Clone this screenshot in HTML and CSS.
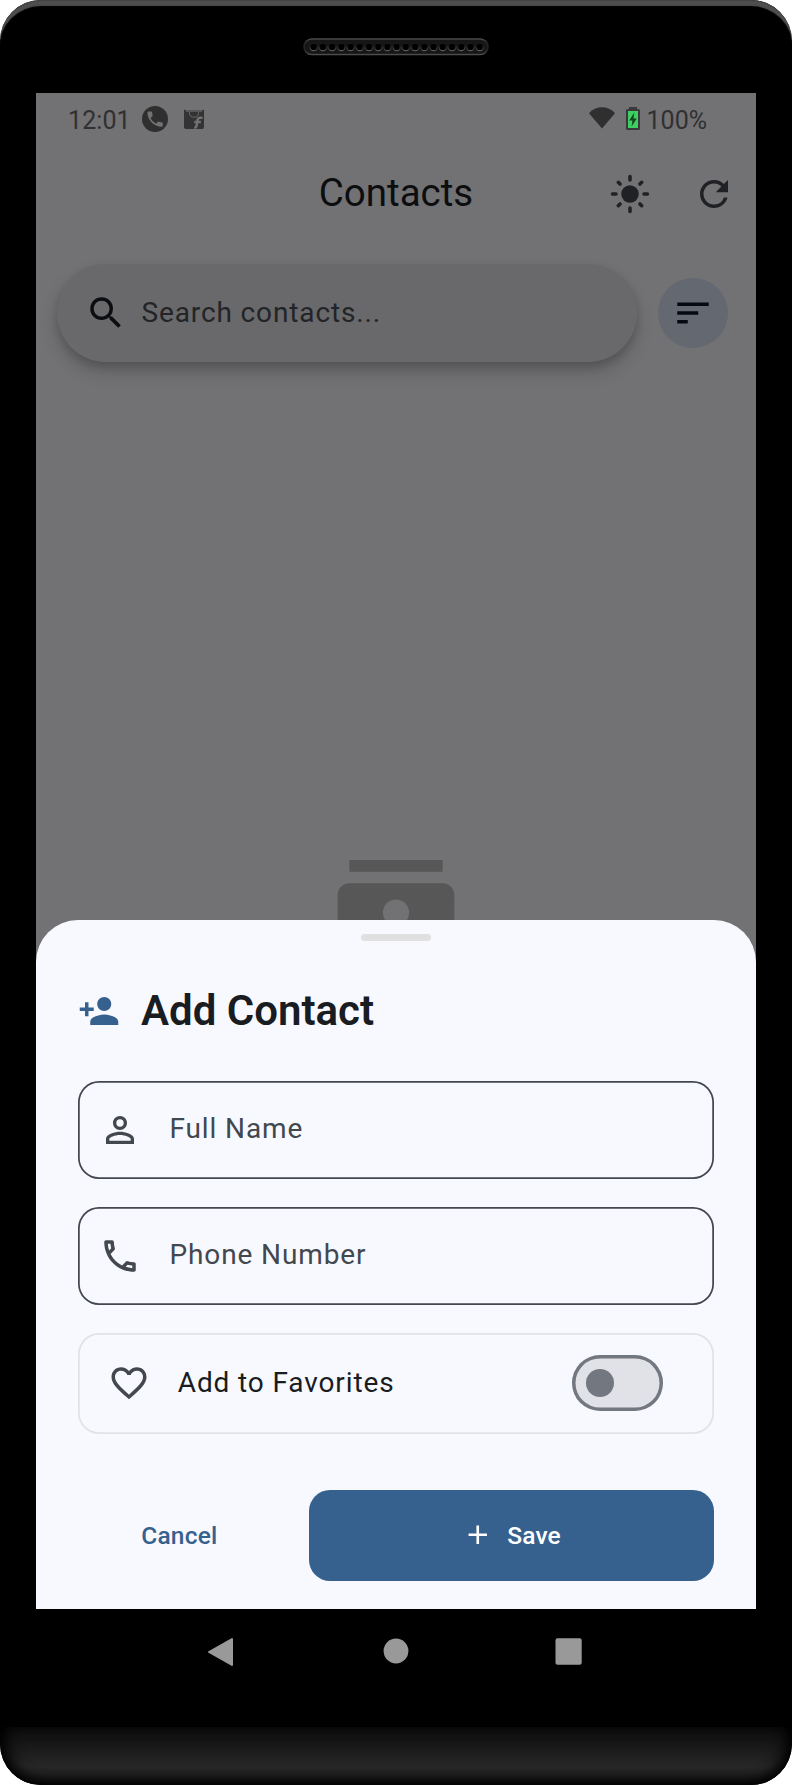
FILE: index.html
```html
<!DOCTYPE html>
<html lang="en">
<head>
<meta charset="utf-8">
<title>Contacts</title>
<link rel="stylesheet" href="styles.css">
</head>
<body>
<div class="phone">
  <div class="bezel-top">
    <svg class="speaker" width="186" height="18" viewBox="0 0 186 18">
      <defs>
        <linearGradient id="rim" x1="0" y1="0" x2="0" y2="1">
          <stop offset="0" stop-color="#4a4a4a"/><stop offset=".3" stop-color="#222"/><stop offset=".7" stop-color="#222"/><stop offset="1" stop-color="#4c4c4c"/>
        </linearGradient>
        <linearGradient id="hole" x1="0" y1="0" x2="0" y2="1">
          <stop offset=".3" stop-color="#1a1a1a"/><stop offset="1" stop-color="#6a6a6a"/>
        </linearGradient>
        <pattern id="holes" x="6.1" y="4" width="9.22" height="10" patternUnits="userSpaceOnUse">
          <circle cx="4.6" cy="5" r="3.7" fill="#000" stroke="url(#hole)" stroke-width="1"/>
        </pattern>
      </defs>
      <rect x="1" y="1" width="184" height="15.5" rx="7.75" fill="#161616" stroke="url(#rim)" stroke-width="1.6"/>
      <rect x="6.1" y="4" width="175.2" height="10" fill="url(#holes)"/>
    </svg>
  </div>

  <div class="screen">
    <div class="status">
      <span class="clock">12:01</span>
      <svg class="st-call" width="26" height="26" viewBox="0 0 26 26">
        <circle cx="13" cy="13" r="13" fill="#2f2f2f"/>
        <path transform="translate(2.9 2.9) scale(.85)" fill="#727274" d="M6.6 10.8c1.4 2.8 3.8 5.1 6.6 6.6l2.2-2.2c.3-.3.7-.4 1-.2 1.1.4 2.300.6 3.600.6.6 0 1 .4 1 1V20c0 .6-.4 1-1 1-9.400 0-17-7.600-17-17 0-.6.4-1 1-1h3.500c.6 0 1 .4 1 1 0 1.200.2 2.400.6 3.600.1.3 0 .7-.2 1z"/>
      </svg>
      <svg class="st-bag" width="20" height="20" viewBox="0 0 20 20">
        <path fill="#333" d="M0 .5 2 1.500h16l2-1V18a2 2 0 0 1-2 2H2a2 2 0 0 1-2-2z"/>
        <path fill="none" stroke="#68686a" stroke-width="1" d="M2 2.200h16M5.500 3v1.500a4.500 3.800 0 0 0 9 0V3"/>
        <path fill="none" stroke="#727274" stroke-width="2.400" d="M18.500 8.700h-2.200c-1.800 0-2.600.8-2.800 2.500l-.8 5.300c-.2 1.400-1 2.100-2.400 2.100M10.300 13h6.600"/>
      </svg>
      <span class="spacer"></span>
      <svg class="st-wifi" width="26" height="22" viewBox="0 0 26 22"><path fill="#2f2f2f" d="M13 21.500 0 6.300C3.500 2.200 8 .3 13 .3s9.500 1.900 13 6z"/></svg>
      <svg class="st-batt" width="14" height="23" viewBox="0 0 14 23">
        <path fill="#3a3a3c" d="M3 0h8v2h1.500A1.500 1.500 0 0 1 14 3.500v18a1.500 1.500 0 0 1-1.500 1.500h-11A1.500 1.500 0 0 1 0 21.500v-18A1.500 1.500 0 0 1 1.500 2H3z"/>
        <rect x="2" y="4" width="10" height="17" fill="#3ecf63"/>
        <path fill="#14461f" d="M8.300 5.500 3.200 13.600h3.200l-.8 5.900 5.200-8.100H7.500z"/>
      </svg>
      <span class="pct">100%</span>
    </div>

    <div class="appbar">
      <h1 class="appbar-title">Contacts</h1>
      <div class="actions">
        <svg class="ic" viewBox="0 0 24 24"><circle cx="12" cy="12" r="5" fill="#202124"/><path fill="none" stroke="#202124" stroke-width="2" stroke-linecap="round" d="M2 12h2M20 12h2M12 2v2M12 20v2M5.290 5.290l1.050 1.050M17.660 17.660l1.050 1.050M18.710 5.290l-1.050 1.050M6.340 17.660l-1.050 1.050"/></svg>
        <svg class="ic" viewBox="0 0 24 24"><path fill="#202124" d="M17.650 6.350A7.958 7.958 0 0 0 12 4c-4.420 0-7.990 3.580-7.990 8s3.570 8 7.990 8c3.730 0 6.840-2.550 7.730-6h-2.080A5.990 5.990 0 0 1 12 18c-3.310 0-6-2.690-6-6s2.690-6 6-6c1.660 0 3.140.69 4.220 1.780L13 11h7V4l-2.350 2.350z"/></svg>
      </div>
    </div>

    <div class="search-row">
      <div class="search">
        <svg class="ic" viewBox="0 0 24 24"><path fill="#0c0d10" d="M15.500 14h-.79l-.28-.27A6.471 6.471 0 0 0 16 9.500 6.500 6.500 0 1 0 9.500 16c1.610 0 3.090-.59 4.230-1.570l.27.28v.79l5 4.990L20.490 19l-4.990-5zm-6 0C7.010 14 5 11.990 5 9.500S7.010 5 9.500 5 14 7.010 14 9.500 11.990 14 9.500 14z"/></svg>
        <span class="hint">Search contacts...</span>
      </div>
      <div class="sort">
        <svg class="ic" viewBox="0 0 24 24"><path fill="#040a14" d="M3 18h6v-2H3v2zM3 6v2h18V6H3zm0 7h12v-2H3v2z"/></svg>
      </div>
    </div>

    <div class="empty">
      <svg width="140" height="140" viewBox="0 0 24 24"><path fill="#575757" d="M20 0H4v2h16V0zM4 24h16v-2H4v2zM20 4H4c-1.100 0-2 .9-2 2v12c0 1.100.9 2 2 2h16c1.100 0 2-.9 2-2V6c0-1.100-.9-2-2-2zm-8 2.750a2.250 2.250 0 1 1 0 4.500 2.250 2.250 0 0 1 0-4.500zM17 17H7v-1.500c0-1.670 3.330-2.500 5-2.500s5 .83 5 2.500V17z"/></svg>
    </div>

    <div class="sheet">
      <div class="handle"></div>
      <div class="sheet-head">
        <svg class="ic" viewBox="0 0 24 24"><path fill="#36618e" d="M15 12c2.210 0 4-1.790 4-4s-1.790-4-4-4-4 1.790-4 4 1.790 4 4 4zm-9-2V7H4v3H1v2h3v3h2v-3h3v-2H6zm9 4c-2.670 0-8 1.340-8 4v2h16v-2c0-2.660-5.330-4-8-4z"/></svg>
        <h2 class="sheet-title">Add Contact</h2>
      </div>
      <div class="field">
        <svg class="ic" viewBox="0 0 24 24"><path fill="#43474e" d="M12 5.900a2.100 2.100 0 1 1 0 4.200 2.100 2.100 0 0 1 0-4.200m0 9c2.970 0 6.100 1.460 6.100 2.100v1.100H5.900V17c0-.64 3.130-2.100 6.100-2.100M12 4C9.790 4 8 5.790 8 8s1.790 4 4 4 4-1.790 4-4-1.790-4-4-4zm0 9c-2.670 0-8 1.340-8 4v3h16v-3c0-2.660-5.330-4-8-4z"/></svg>
        <span class="label">Full Name</span>
      </div>
      <div class="field">
        <svg class="ic" viewBox="0 0 24 24"><path fill="#43474e" d="M6.540 5c.06.89.21 1.760.45 2.590l-1.200 1.200c-.41-1.200-.67-2.470-.76-3.790h1.510m9.860 12.020c.85.24 1.720.39 2.600.45v1.490c-1.320-.09-2.590-.35-3.800-.75l1.200-1.190M7.500 3H4c-.55 0-1 .45-1 1 0 9.390 7.610 17 17 17 .55 0 1-.45 1-1v-3.490c0-.55-.45-1-1-1-1.240 0-2.450-.2-3.570-.57a.84.84 0 0 0-.31-.05c-.26 0-.51.1-.71.29l-2.200 2.200a15.149 15.149 0 0 1-6.590-6.590l2.200-2.200c.28-.28.36-.67.25-1.020A11.360 11.360 0 0 1 8.500 4c0-.55-.45-1-1-1z"/></svg>
        <span class="label">Phone Number</span>
      </div>
      <div class="favorite">
        <svg class="ic" viewBox="0 0 24 24"><path fill="#43474e" d="M16.500 3c-1.740 0-3.410.81-4.500 2.090C10.910 3.810 9.240 3 7.500 3 4.420 3 2 5.420 2 8.500c0 3.780 3.400 6.860 8.550 11.540L12 21.350l1.450-1.320C18.600 15.360 22 12.280 22 8.500 22 5.420 19.580 3 16.500 3zm-4.400 15.550-.1.100-.1-.1C7.140 14.240 4 11.390 4 8.500 4 6.500 5.500 5 7.500 5c1.540 0 3.040.99 3.570 2.360h1.870C13.460 5.990 14.960 5 16.500 5c2 0 3.500 1.500 3.500 3.500 0 2.890-3.140 5.740-7.900 10.050z"/></svg>
        <span class="fav-label">Add to Favorites</span>
        <div class="switch"><div class="knob"></div></div>
      </div>
      <div class="buttons">
        <div class="cancel">Cancel</div>
        <div class="save">
          <svg width="31.500" height="31.500" viewBox="0 0 24 24"><path fill="#fff" d="M19 13h-6v6h-2v-6H5v-2h6V5h2v6h6v2z"/></svg>
          <span>Save</span>
        </div>
      </div>
    </div>
  </div>

  <div class="navbar">
    <svg width="27" height="30" viewBox="0 0 27 30"><path fill="#999" stroke="#999" stroke-width="2" stroke-linejoin="round" d="M25 2v26L2 15z"/></svg>
    <svg width="28" height="26" viewBox="0 0 28 26"><circle cx="15" cy="13" r="12.400" fill="#999"/></svg>
    <svg width="27" height="27" viewBox="0 0 27 27"><rect x=".5" y=".3" width="26.200" height="26.400" rx="2" fill="#999"/></svg>
  </div>
  <div class="chin"></div>
</div>
</body>
</html>
```

FILE: styles.css
```css
* { box-sizing: border-box; }
body { margin: 0; background: #fff; font-family: Roboto, "Liberation Sans", sans-serif; }
h1, h2 { margin: 0; }
svg { display: block; flex: none; }
.ic { width: 42px; height: 42px; }

.phone {
  width: 792px; height: 1785px;
  display: flex; flex-direction: column;
  background: #000; border-radius: 41px; overflow: hidden;
}
.bezel-top {
  height: 93px; flex: none; padding-top: 38px;
  display: flex; justify-content: center; align-items: flex-start;
  border-radius: 41px 41px 0 0;
  box-shadow: inset 0 2px 1px -1px #424242, inset 0 7px 1px -1px #4e4e4e;
}

.screen {
  position: relative; flex: none;
  width: 720px; height: 1516px; margin: 0 36px;
  background: #727274; overflow: hidden;
  display: flex; flex-direction: column;
}
.status {
  display: flex; align-items: center;
  height: 52px; padding: 0 49px 0 32px;
  font-size: 25px; line-height: 48px; color: #303030;
}
.clock, .pct { padding-top: 4px; }
.clock { letter-spacing: .1px; }
.st-call { margin-left: 11px; }
.st-bag { margin-left: 16px; }
.spacer { flex: 1; }
.st-wifi { margin-bottom: 2px; }
.st-batt { margin: 0 7px 2px 11px; }

.appbar {
  display: flex; align-items: center; justify-content: flex-end;
  height: 98px; padding-right: 21px; position: relative;
}
.appbar-title {
  position: absolute; left: 0; right: 0; text-align: center;
  font-size: 38.5px; font-weight: 400; line-height: 96px; padding-bottom: 2px; color: #0c0d0f;
}
.actions { display: flex; gap: 42px; }

.search-row { display: flex; align-items: center; padding: 21px 28px 0 21px; }
.search {
  display: flex; align-items: center; gap: 14.5px;
  width: 580px; height: 98px; padding-left: 28px;
  border-radius: 49px; background: #69696b;
  box-shadow: 0 10px 18px rgba(0,0,0,.16), 0 5px 8px rgba(0,0,0,.14);
}
.hint { font-size: 28px; letter-spacing: .875px; line-height: 40px; color: #222428; }
.sort {
  display: flex; align-items: center; justify-content: center;
  width: 70px; height: 70px; margin-left: 21px;
  border-radius: 50%; background: #636871;
}
.empty { display: flex; justify-content: center; margin-top: 498px; }

.sheet {
  position: absolute; left: 0; right: 0; bottom: 0; height: 689.5px;
  padding: 14px 42px 28px;
  background: #f8f9ff; border-radius: 42px 42px 0 0;
}
.handle { width: 70px; height: 7px; margin: 0 auto; border-radius: 4px; background: #e0e0e0; }
.sheet-head { display: flex; align-items: center; gap: 21px; height: 56px; margin-top: 42px; }
.sheet-title { font-size: 42px; font-weight: 600; line-height: 56px; color: #191c20; }
.field {
  display: flex; align-items: center; gap: 28.5px;
  height: 98px; padding-left: 21px; margin-top: 28px;
  box-shadow: inset 0 0 0 1.75px #43474e; border-radius: 21px;
}
.sheet-head + .field { margin-top: 42px; }
.label, .fav-label { font-size: 28px; letter-spacing: .875px; line-height: 42px; color: #43474e; }
.label { padding-bottom: 2px; }
.favorite {
  display: flex; align-items: center; gap: 28px;
  height: 101px; padding: 0 50.750px 0 29.750px; margin-top: 28px;
  box-shadow: inset 0 0 0 1.75px #e0e2e6; border-radius: 21px;
}
.fav-label { color: #191c20; flex: 1; }
.switch {
  display: flex; align-items: center;
  width: 91px; height: 56px; padding-left: 14px;
  box-shadow: inset 0 0 0 3.5px #73777f; border-radius: 28px; background: #e1e2e8;
}
.knob { width: 28px; height: 28px; border-radius: 50%; background: #73777f; }
.buttons { display: flex; gap: 28px; margin-top: 56px; }
.cancel, .save {
  display: flex; align-items: center; justify-content: center;
  height: 91px; border-radius: 21px;
  font-size: 24.500px; font-weight: 500; letter-spacing: .175px;
}
.cancel { flex: 1; color: #36618e; }
.save { flex: 2; gap: 14px; color: #fff; background: #36618e; }

.navbar {
  flex: none; height: 118px; padding: 28px 210px 0 207px;
  display: flex; justify-content: space-between; align-items: flex-start;
}
.navbar svg + svg { margin-top: 1px; }
.chin {
  flex: 1; border-radius: 0 0 41px 41px;
  box-shadow: inset 0 -14px 14px -10px #000, inset 10px 0 16px -4px #000, inset -10px 0 16px -4px #000;
  background: linear-gradient(#101010, #171717 30%, #272727 68%, #222 100%);
}
```
